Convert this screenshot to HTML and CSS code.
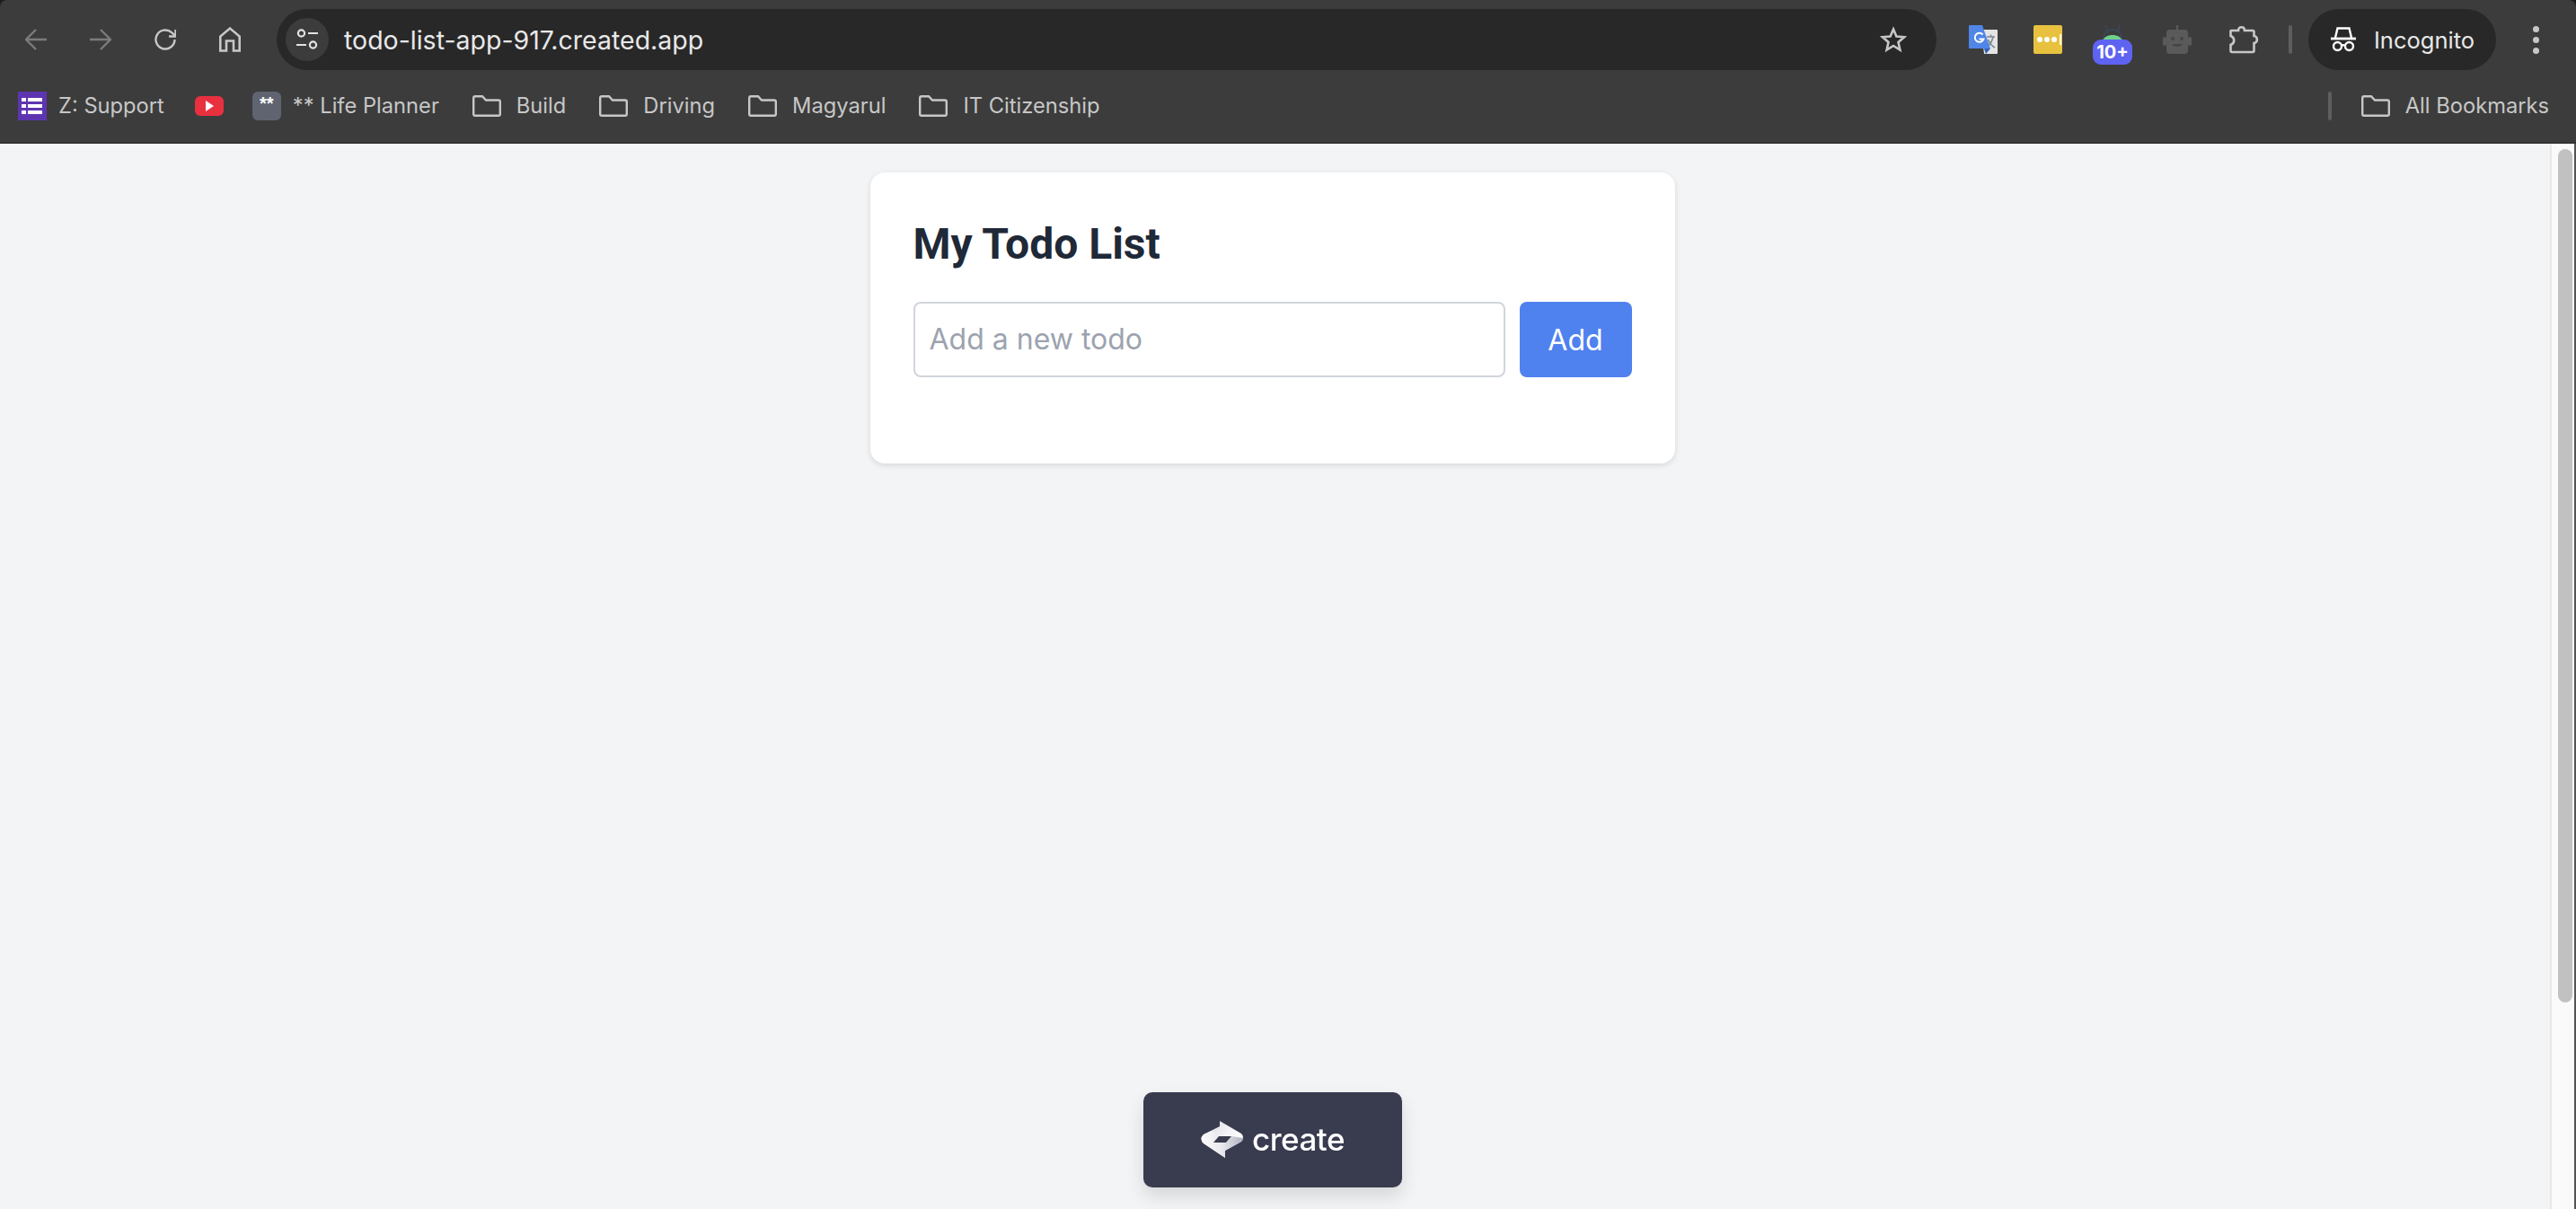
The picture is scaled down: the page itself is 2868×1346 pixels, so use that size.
FILE: index.html
```html
<!DOCTYPE html>
<html lang="en">
<head>
    <meta charset="UTF-8">
    <title>My Todo List</title>
    <link rel="stylesheet" href="styles.css">
</head>
<body>
    <div class="browser">
        <div class="toolbar">
            <span class="nav-btn"><svg width="24" height="24" viewBox="0 0 24 24" fill="none" stroke="#7b7b7b" stroke-width="2.4"><path d="M1 12H24M12 1 1 12 12 23"/></svg></span>
            <span class="nav-btn"><svg width="24" height="24" viewBox="0 0 24 24" fill="none" stroke="#7b7b7b" stroke-width="2.4"><path d="M0 12H23M12 1 23 12 12 23"/></svg></span>
            <span class="nav-btn"><svg width="24" height="24" viewBox="0 0 24 24" fill="none" stroke="#c7c7c7" stroke-width="2.4"><path d="M22.5 12A10.5 10.5 0 1 1 19 4.2L23 7.5"/><path d="M23.5 1V8.5H16" /></svg></span>
            <span class="nav-btn"><svg width="24" height="28" viewBox="0 0 24 28" fill="none" stroke="#c7c7c7" stroke-width="2.6"><path d="M1.3 26.5V10.5L12 1.6 22.7 10.5V26.5H16V15.5H8V26.5Z"/></svg></span>
            <div class="address-bar">
                <span class="site-btn"><svg width="24" height="24" viewBox="0 0 24 24" fill="none" stroke="#e3e3e3" stroke-width="2.2"><circle cx="5.5" cy="5" r="3.6"/><path d="M13 5H24M0 18H11"/><circle cx="18.5" cy="18" r="3.6"/></svg></span>
                <span class="url">todo-list-app-917.created.app</span>
                <svg class="star" width="30" height="30" viewBox="0 0 30 30" fill="none" stroke="#c7c7c7" stroke-width="2.6"><path d="M15 3.5 18.4 11.6 27 12.3 20.5 18 22.4 26.5 15 22 7.6 26.5 9.5 18 3 12.3 11.6 11.6Z"/></svg>
            </div>
            <svg class="ext ext-translate" width="32" height="32" viewBox="0 0 32 32">
                <path d="M14 5H31a1 1 0 0 1 1 1V31a1 1 0 0 1-1 1H17Z" fill="#e4e4e4"/>
                <path d="M20 13H29M24.500 10.500V13M27 13C26 18 23.500 22 19.500 24.500M21.500 16C23 20 25.500 23 29 25" fill="none" stroke="#7d8790" stroke-width="1.6"/>
                <path d="M1 0H15L24 26H1A1 1 0 0 1 0 25V1A1 1 0 0 1 1 0Z" fill="#4f86e8"/>
                <path d="M17 26H24L19 32Z" fill="#2f5fb8"/>
                <path d="M15.500 10.500A5 5 0 1 0 16.500 15.500H11.500" fill="none" stroke="#fff" stroke-width="2"/>
            </svg>
            <span class="ext ext-lastpass"><i></i><i></i><i></i><b></b></span>
            <span class="ext ext-android">
                <svg width="32" height="18" viewBox="0 0 32 18" fill="none">
                    <path d="M6 16C6 8 11 5 16 5S26 8 26 16" stroke="#3c4657" stroke-width="2"/>
                    <path d="M8 0 11 8M24 0 21 8" stroke="#3c4657" stroke-width="2"/>
                    <path d="M5 17C7 13 11 11 16 11S25 13 27 17Z" fill="#6fd18c"/>
                </svg>
                <span class="ext-badge">10+</span>
            </span>
            <svg class="ext ext-robot" width="32" height="32" viewBox="0 0 32 32">
                <path d="M15 0h2v5h-2z" fill="#5a5a5a"/>
                <circle cx="16" cy="1.500" r="1.500" fill="#5a5a5a"/>
                <rect x="4" y="5" width="24" height="27" rx="4" fill="#5a5a5a"/>
                <rect x="0" y="13" width="4" height="10" rx="2" fill="#5a5a5a"/>
                <rect x="28" y="13" width="4" height="10" rx="2" fill="#5a5a5a"/>
                <circle cx="11" cy="15" r="2" fill="#464646"/>
                <circle cx="21" cy="15" r="2" fill="#464646"/>
                <path d="M10 21H22C21 25 11 25 10 21Z" fill="#464646"/>
            </svg>
            <svg class="ext ext-puzzle" width="33" height="32" viewBox="0 0 33 32" fill="none" stroke="#c7c7c7" stroke-width="2.600"><path d="M2 6H10C10 1 17 1 17 6H26A1.500 1.500 0 0 1 27.500 7.500V12C32 12 32 20 27.500 20V28.500A1.500 1.500 0 0 1 26 30H3A1.500 1.500 0 0 1 1.500 28.500V22C6.500 20 6.500 14 1.500 12V6.500Z"/></svg>
            <span class="toolbar-divider"></span>
            <div class="incognito">
                <svg width="28" height="28" viewBox="0 0 28 28" fill="none" stroke="#fff" stroke-width="2.400"><path d="M5 12 7.500 1.500H20.500L23 12"/><path d="M0 13H28" stroke-width="2.800"/><circle cx="7.500" cy="21.500" r="4.500"/><circle cx="20.500" cy="21.500" r="4.500"/><path d="M12 21C13 20 15 20 16 21"/></svg>
                <span>Incognito</span>
            </div>
            <span class="menu-dots"><i></i><i></i><i></i></span>
        </div>
        <div class="bookmarks">
            <span class="bm-icon bm-forms"><svg width="24" height="20" viewBox="0 0 24 20" fill="#fff"><path d="M0 1h5v4H0zM7 1h16v4H7zM0 8h5v4H0zM7 8h16v4H7zM0 15h5v4H0zM7 15h16v4H7z"/></svg></span>
            <span class="bm-label bm-fav-label">Z: Support</span>
            <span class="bm-yt"><svg width="14" height="14" viewBox="0 0 14 14" fill="#fff"><path d="M3 1 12 7 3 13Z"/></svg></span>
            <span class="bm-icon bm-stars">**</span>
            <span class="bm-label bm-fav-label">** Life Planner</span>
            <svg class="folder" width="32" height="24" viewBox="0 0 32 24" fill="none" stroke="#c7c7c7" stroke-width="2.400"><path d="M1.200 3A1.800 1.800 0 0 1 3 1.200H11L15 5.500H29A1.800 1.800 0 0 1 30.800 7.300V21A1.800 1.800 0 0 1 29 22.800H3A1.800 1.800 0 0 1 1.200 21Z"/></svg>
            <span class="bm-label">Build</span>
            <svg class="folder" width="32" height="24" viewBox="0 0 32 24" fill="none" stroke="#c7c7c7" stroke-width="2.400"><path d="M1.200 3A1.800 1.800 0 0 1 3 1.200H11L15 5.500H29A1.800 1.800 0 0 1 30.800 7.300V21A1.800 1.800 0 0 1 29 22.800H3A1.800 1.800 0 0 1 1.200 21Z"/></svg>
            <span class="bm-label">Driving</span>
            <svg class="folder" width="32" height="24" viewBox="0 0 32 24" fill="none" stroke="#c7c7c7" stroke-width="2.400"><path d="M1.200 3A1.800 1.800 0 0 1 3 1.200H11L15 5.500H29A1.800 1.800 0 0 1 30.800 7.300V21A1.800 1.800 0 0 1 29 22.800H3A1.800 1.800 0 0 1 1.200 21Z"/></svg>
            <span class="bm-label">Magyarul</span>
            <svg class="folder" width="32" height="24" viewBox="0 0 32 24" fill="none" stroke="#c7c7c7" stroke-width="2.400"><path d="M1.200 3A1.800 1.800 0 0 1 3 1.200H11L15 5.500H29A1.800 1.800 0 0 1 30.800 7.300V21A1.800 1.800 0 0 1 29 22.800H3A1.800 1.800 0 0 1 1.200 21Z"/></svg>
            <span class="bm-label">IT Citizenship</span>
            <span class="bm-divider"></span>
            <svg class="folder folder-all" width="32" height="24" viewBox="0 0 32 24" fill="none" stroke="#c7c7c7" stroke-width="2.400"><path d="M1.200 3A1.800 1.800 0 0 1 3 1.200H11L15 5.500H29A1.800 1.800 0 0 1 30.800 7.300V21A1.800 1.800 0 0 1 29 22.800H3A1.800 1.800 0 0 1 1.200 21Z"/></svg>
            <span class="bm-label">All Bookmarks</span>
        </div>
    </div>

    <div class="viewport">
        <div class="page">
            <div class="card">
                <h1>My Todo List</h1>
                <form class="todo-form">
                    <input type="text" placeholder="Add a new todo">
                    <button type="button">Add</button>
                </form>
            </div>
        </div>
        <div class="scrollbar"><div class="thumb"></div></div>
    </div>

    <!-- floating badge -->
    <a class="create-badge">
        <svg width="48" height="41" viewBox="0 0 48 41">
            <defs>
                <linearGradient id="logoA" x1="0" y1="0" x2="1" y2="0.6"><stop offset="0" stop-color="#d4d4dc"/><stop offset="0.6" stop-color="#f4f4f7"/><stop offset="1" stop-color="#ffffff"/></linearGradient>
                <linearGradient id="logoB" x1="0" y1="0" x2="1" y2="0"><stop offset="0" stop-color="#ffffff"/><stop offset="0.5" stop-color="#e6e6ec"/><stop offset="1" stop-color="#a9a9b8"/></linearGradient>
            </defs>
            <path d="M21 0 45 14Q49 18 45 23L27 33V41L3 25Q-2 20 3 15L21 6Z" fill="url(#logoA)"/>
            <path d="M3 15Q-2 20 3 25L27 41V33L45 23Q47 21 47 19L34 17 28 24H14L20 17 12 11Z" fill="url(#logoB)" opacity="0.9"/>
            <path d="M14 24 20 17H34L28 24Z" fill="#393b4f"/>
        </svg>
        <span>create</span>
    </a>
</body>
</html>
```

FILE: styles.css
```css
* {
    margin: 0;
    padding: 0;
    box-sizing: border-box;
}
body {
    height: 100vh;
    display: flex;
    flex-direction: column;
    overflow: hidden;
    background: #1c1c1c;
    font-family: 'Inter', sans-serif;
}

/* browser chrome */
.browser {
    flex: none;
    background: #3c3c3c;
    border-radius: 8px 8px 0 0;
    color: #c7c7c7;
}
.toolbar {
    height: 88px;
    padding: 10px 41px 10px 4px;
    display: flex;
    align-items: center;
}
.nav-btn {
    width: 72px;
    display: flex;
    justify-content: center;
}
.address-bar {
    flex: 1;
    height: 68px;
    margin-left: 16px;
    padding: 0 33px 0 10px;
    display: flex;
    align-items: center;
    background: #282828;
    border-radius: 34px;
}
.site-btn {
    width: 48px;
    height: 48px;
    display: flex;
    align-items: center;
    justify-content: center;
    background: #3c3c3c;
    border-radius: 50%;
}
.url {
    flex: 1;
    margin-left: 17px;
    font-size: 28.5px;
    color: #e8e8e8;
}
.ext {
    flex: none;
}
.ext-translate {
    margin-left: 36px;
}
.ext-lastpass {
    width: 32px;
    height: 32px;
    margin-left: 40px;
    padding-left: 4px;
    display: flex;
    align-items: center;
    gap: 2px;
    background: #e8c23f;
    border-radius: 2px;
}
.ext-lastpass i {
    width: 6px;
    height: 6px;
    background: #fff;
    border-radius: 50%;
}
.ext-lastpass b {
    width: 2px;
    height: 12px;
    margin-left: 1px;
    background: #fff;
}
.ext-android {
    width: 44px;
    height: 44px;
    margin-left: 34px;
    display: flex;
    flex-direction: column;
    align-items: center;
    position: relative;
    top: 6px;
}
.ext-badge {
    width: 44px;
    height: 28px;
    margin-top: -2px;
    background: #5f63f2;
    border-radius: 9px;
    color: #fff;
    font-size: 20px;
    font-weight: 700;
    line-height: 28px;
    text-align: center;
}
.ext-robot {
    margin-left: 34px;
}
.ext-puzzle {
    margin-left: 42px;
}
.toolbar-divider {
    width: 4px;
    height: 32px;
    margin-left: 33px;
    background: #5e5e5e;
    border-radius: 2px;
}
.incognito {
    width: 209px;
    height: 68px;
    margin-left: 18px;
    padding-left: 25px;
    display: flex;
    align-items: center;
    gap: 20px;
    background: #282828;
    border-radius: 34px;
    color: #e8e8e8;
    font-size: 25.5px;
}
.menu-dots {
    margin-left: 41px;
    display: flex;
    flex-direction: column;
    gap: 5px;
}
.menu-dots i {
    width: 7px;
    height: 7px;
    background: #c7c7c7;
    border-radius: 50%;
}

/* bookmarks bar */
.bookmarks {
    height: 72px;
    padding: 14px 30px 0 20px;
    display: flex;
    align-items: flex-start;
    border-bottom: 2px solid #333;
}
.bm-icon {
    width: 32px;
    height: 32px;
    flex: none;
    display: flex;
    align-items: center;
    justify-content: center;
}
.bm-forms {
    background: #5e35b1;
}
.bm-stars {
    margin-left: 32px;
    padding-top: 2px;
    background: #5f6470;
    border-radius: 6px;
    color: #fff;
    font-family: 'Liberation Sans', sans-serif;
    font-size: 20px;
    font-weight: 700;
    align-items: flex-start;
}
.bm-yt {
    width: 32px;
    height: 22px;
    margin-top: 5px;
    margin-left: 34px;
    display: flex;
    align-items: center;
    justify-content: center;
    background: #e9303f;
    border-radius: 6px;
}
.bm-label {
    margin-left: 17px;
    font-size: 23.7px;
    line-height: 32px;
    white-space: nowrap;
}
.bm-fav-label {
    margin-left: 13px;
}
.folder {
    margin-top: 4px;
    margin-left: 37px;
    flex: none;
}
.bm-divider {
    width: 4px;
    height: 32px;
    margin-left: auto;
    background: #5e5e5e;
    border-radius: 2px;
}
.folder-all {
    margin-left: 33px;
}

/* page content */
.viewport {
    flex: 1;
    display: flex;
    min-height: 0;
    background: #f3f4f6;
}
.page {
    flex: 1;
    padding: 32px 6px 0 0;
    display: flex;
    justify-content: center;
    align-items: flex-start;
}
.card {
    width: 896px;
    padding: 48px 48px 96px;
    background: #fff;
    border-radius: 16px;
    box-shadow: 0 2px 6px rgba(0, 0, 0, 0.12);
}
.card h1 {
    margin-bottom: 32px;
    color: #1f2937;
    font-family: 'Roboto', sans-serif;
    font-size: 48px;
    line-height: 64px;
    font-weight: 700;
}
.todo-form {
    display: flex;
    gap: 16px;
}
.todo-form input {
    flex: 1;
    height: 84px;
    padding: 0 16px 2px;
    border: 2px solid #d1d5db;
    border-radius: 8px;
    outline: none;
    font-family: inherit;
    font-size: 32px;
}
.todo-form input::placeholder {
    color: #9ca3af;
}
.todo-form button {
    width: 125px;
    height: 84px;
    border: none;
    border-radius: 8px;
    background: #4f81ef;
    color: #fff;
    font-family: inherit;
    font-size: 32px;
}
.scrollbar {
    width: 29px;
    padding: 6px 4px 0 7px;
    background: #fafafa;
    border-left: 2px solid #e8e8e8;
    border-right: 2px solid #555;
}
.thumb {
    width: 16px;
    height: 950px;
    background: #c1c1c1;
    border-radius: 8px;
}

/* floating badge */
.create-badge {
    position: fixed;
    left: 1273px;
    bottom: 24px;
    width: 288px;
    height: 106px;
    padding-bottom: 2px;
    display: flex;
    align-items: center;
    justify-content: center;
    gap: 9px;
    background: #393b4f;
    border-radius: 10px;
    box-shadow: 0 10px 20px rgba(0, 0, 0, 0.12);
    color: #fff;
    font-size: 35px;
    font-weight: 500;
    letter-spacing: -0.5px;
}
```
